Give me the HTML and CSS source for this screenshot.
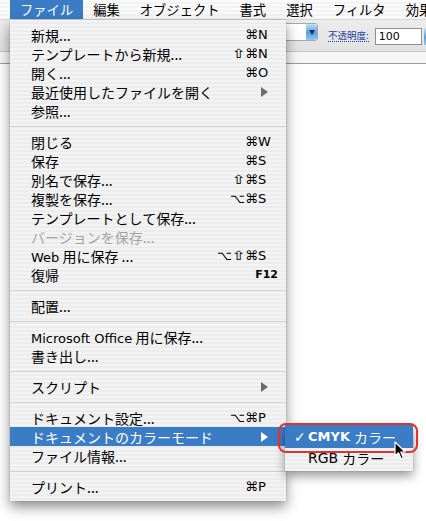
FILE: index.html
```html
<!DOCTYPE html>
<html lang="ja">
<head>
<meta charset="utf-8">
<title>ファイル メニュー</title>
<link rel="stylesheet" href="styles.css">
</head>
<body>
<div class="menubar">
  <span class="mb-item active">ファイル</span>
  <span class="mb-item">編集</span>
  <span class="mb-item">オブジェクト</span>
  <span class="mb-item">書式</span>
  <span class="mb-item">選択</span>
  <span class="mb-item">フィルタ</span>
  <span class="mb-item">効果</span>
</div>

<div class="window">
  <div class="toolbar">
    <div class="dropdown"><span class="dd-btn"><span class="dd-tri"></span></span></div>
    <span class="tb-label">不透明度:</span>
    <div class="tb-input">100</div>
    <span class="tb-btn"></span>
  </div>
  <div class="band"></div>
  <div class="canvas"></div>
</div>

<div class="menu">
  <div class="item"><span class="label">新規...</span><span class="mods">⌘</span><span class="key">N</span></div>
  <div class="item"><span class="label">テンプレートから新規...</span><span class="mods"><span class="shift">⇧</span>⌘</span><span class="key">N</span></div>
  <div class="item"><span class="label">開く...</span><span class="mods">⌘</span><span class="key">O</span></div>
  <div class="item"><span class="label">最近使用したファイルを開く</span><span class="arrow"></span></div>
  <div class="item"><span class="label">参照...</span></div>
  <div class="sep"></div>
  <div class="item"><span class="label">閉じる</span><span class="mods">⌘</span><span class="key">W</span></div>
  <div class="item"><span class="label">保存</span><span class="mods">⌘</span><span class="key">S</span></div>
  <div class="item"><span class="label">別名で保存...</span><span class="mods"><span class="shift">⇧</span>⌘</span><span class="key">S</span></div>
  <div class="item"><span class="label">複製を保存...</span><span class="mods">⌥⌘</span><span class="key">S</span></div>
  <div class="item"><span class="label">テンプレートとして保存...</span></div>
  <div class="item disabled"><span class="label">バージョンを保存...</span></div>
  <div class="item"><span class="label"><span class="lat">Web</span> 用に保存 ...</span><span class="mods">⌥<span class="shift">⇧</span>⌘</span><span class="key">S</span></div>
  <div class="item"><span class="label">復帰</span><span class="fkey">F12</span></div>
  <div class="sep"></div>
  <div class="item"><span class="label">配置...</span></div>
  <div class="sep"></div>
  <div class="item"><span class="label"><span class="lat">Microsoft Office</span> 用に保存...</span></div>
  <div class="item"><span class="label">書き出し...</span></div>
  <div class="sep"></div>
  <div class="item"><span class="label">スクリプト</span><span class="arrow"></span></div>
  <div class="sep"></div>
  <div class="item"><span class="label">ドキュメント設定...</span><span class="mods">⌥⌘</span><span class="key">P</span></div>
  <div class="item selected"><span class="label">ドキュメントのカラーモード</span><span class="arrow"></span></div>
  <div class="item"><span class="label">ファイル情報...</span></div>
  <div class="sep"></div>
  <div class="item"><span class="label">プリント...</span><span class="mods">⌘</span><span class="key">P</span></div>
</div>

<div class="submenu">
  <div class="sub-item selected first"><span class="check">✓</span><span class="lat">CMYK</span> カラー</div>
  <div class="sub-item"><span class="check"></span><span class="lat">RGB</span> カラー</div>
</div>

<div class="ring"></div>

<svg class="cursor" width="14" height="20" viewBox="0 0 14 20">
  <path d="M1 1 L1 15 L4.5 11.8 L7.2 17.8 L9.4 16.8 L6.8 11 L11.2 11 Z" fill="#000" stroke="#fff" stroke-width="1.2" stroke-linejoin="round"/>
</svg>
</body>
</html>
```

FILE: styles.css
```css
html, body {
  margin: 0;
  padding: 0;
}
body {
  width: 426px;
  height: 521px;
  overflow: hidden;
  background: #ffffff;
  font-family: "Noto Sans CJK JP", "DejaVu Sans", sans-serif;
  color: #000;
  position: relative;
}

/* menu bar */
.menubar {
  display: flex;
  height: 20px;
  padding-left: 10px;
  background: repeating-linear-gradient(#fbfbfb 0 2px, #f3f3f3 2px 4px);
  border-bottom: 1px solid #d8d8d8;
  box-sizing: border-box;
  overflow: hidden;
}
.mb-item {
  flex: none;
  padding: 0 10px;
  font-size: 13.3px;
  line-height: 20px;
  white-space: nowrap;
}
.mb-item.active {
  background: #3a7cc6;
  color: #fff;
}

/* window behind */
.window {
  display: flex;
  flex-direction: column;
}
.toolbar {
  height: 32px;
  box-sizing: border-box;
  display: flex;
  align-items: flex-start;
  background: linear-gradient(#ececec, #e2e2e2);
  border-bottom: 1px solid #c4c4c4;
  overflow: hidden;
}
.dropdown {
  flex: none;
  margin-left: 270px;
  margin-top: 3px;
  width: 48px;
  height: 18px;
  box-sizing: border-box;
  background: #fff;
  border: 1px solid #a8a8a8;
  border-radius: 3px;
  display: flex;
  justify-content: flex-end;
}
.dd-btn {
  width: 11px;
  height: 100%;
  background: linear-gradient(#bfe0fb, #5a9fe0 55%, #8cc6f4);
  border-radius: 0 3px 3px 0;
  display: flex;
  align-items: center;
  justify-content: center;
}
.dd-tri {
  width: 0;
  height: 0;
  border-left: 3px solid transparent;
  border-right: 3px solid transparent;
  border-top: 5px solid #1b2f55;
}
.tb-label {
  flex: none;
  margin-left: 10px;
  margin-top: 9px;
  font-size: 9.5px;
  line-height: 12px;
  white-space: nowrap;
  color: #1f3f9e;
  border-bottom: 1px dotted #1f3f9e;
}
.tb-input {
  flex: none;
  margin-left: 6px;
  margin-top: 8px;
  width: 47px;
  height: 17px;
  box-sizing: border-box;
  background: #fff;
  border: 1px solid #8e8e8e;
  font-family: "DejaVu Sans", sans-serif;
  font-size: 11px;
  line-height: 15px;
  padding-left: 3px;
}
.tb-btn {
  flex: none;
  margin-left: 2px;
  margin-top: 8px;
  width: 10px;
  height: 17px;
  background: linear-gradient(#bfe0fb, #5a9fe0 55%, #8cc6f4);
}
.band {
  height: 11px;
  background: #f6f6f6;
  border-bottom: 1px solid #9c9c9c;
}
.canvas {
  height: 460px;
  background: #fff;
}

/* main menu */
.menu {
  position: absolute;
  left: 10px;
  top: 20px;
  width: 276px;
  padding: 5px 0;
  box-sizing: border-box;
  background: repeating-linear-gradient(#f3f3f3 0 2px, #ececec 2px 4px);
  box-shadow: 0 6px 12px rgba(0, 0, 0, 0.45), 0 0 1px rgba(0, 0, 0, 0.35);
}
.item {
  display: flex;
  align-items: center;
  height: 19px;
  padding: 0 16px 0 21px;
  font-size: 14px;
  white-space: nowrap;
}
.item .label {
  flex: 1;
}
.item.disabled {
  color: #a3a3a3;
}
.item.selected {
  background: #3a7cc6;
  color: #fff;
}
.lat {
  font-family: "DejaVu Sans", sans-serif;
  font-size: 13px;
}
.mods {
  font-family: "DejaVu Sans", sans-serif;
  font-size: 13px;
}
.shift {
  display: inline-block;
  width: 13px;
  text-align: center;
  transform: scaleX(1.35);
}
.key {
  width: 12px;
  font-family: "DejaVu Sans", sans-serif;
  font-size: 13px;
}
.fkey {
  font-family: "DejaVu Sans", sans-serif;
  font-size: 11px;
  font-weight: bold;
  margin-right: -8px;
}
.arrow {
  width: 0;
  height: 0;
  margin-right: 2px;
  border-top: 5px solid transparent;
  border-bottom: 5px solid transparent;
  border-left: 7px solid #6c6c6c;
}
.item.selected .arrow {
  border-left-color: #fff;
}
.sep {
  height: 12px;
  box-sizing: border-box;
  padding-top: 6px;
}
.sep::before {
  content: "";
  display: block;
  height: 1px;
  background: #d2d2d2;
}

/* submenu */
.submenu {
  position: absolute;
  left: 285px;
  top: 425px;
  width: 128px;
  padding-bottom: 4px;
  background: repeating-linear-gradient(#f3f3f3 0 2px, #ececec 2px 4px);
  box-shadow: 0 5px 10px rgba(0, 0, 0, 0.4), 0 0 1px rgba(0, 0, 0, 0.35);
}
.sub-item {
  display: flex;
  align-items: center;
  height: 19px;
  padding-left: 9px;
  font-size: 14px;
  white-space: nowrap;
}
.sub-item.first {
  height: 23px;
}
.sub-item.selected {
  background: #3a7cc6;
  color: #fff;
}
.check {
  width: 14px;
  font-family: "DejaVu Sans", sans-serif;
  font-size: 14px;
}
.sub-item .lat {
  margin-right: 4px;
  font-size: 14px;
}
.sub-item.selected .lat {
  font-weight: bold;
  font-size: 13px;
}

/* red highlight ring */
.ring {
  position: absolute;
  left: 278px;
  top: 423px;
  width: 140px;
  height: 30px;
  box-sizing: border-box;
  border: 2px solid #e4302e;
  border-radius: 8px;
}

.cursor {
  position: absolute;
  left: 394px;
  top: 441px;
}
```
